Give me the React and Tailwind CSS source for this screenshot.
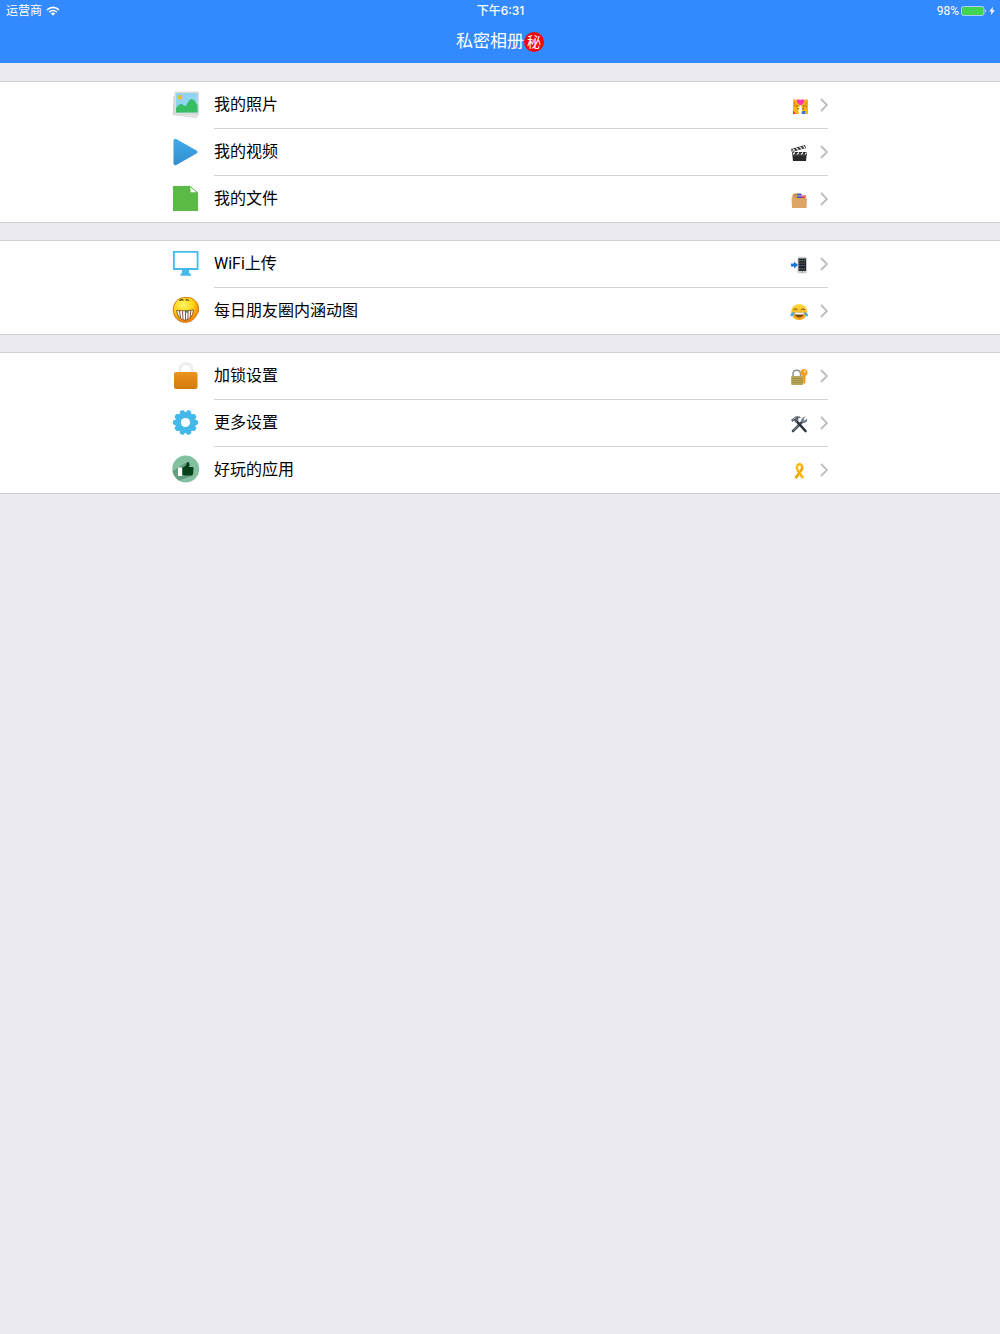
import React from "react";

const PhotoIcon = () => (
  <svg viewBox="0 0 28 28" className="size-7" aria-hidden="true">
    <path d="M1.5 5 L24 2 L26.5 23 L24.5 27 L0.8 24 Z" fill="#d2d2d2" />
    <path d="M24.5 27 L25 24 L4 24 Z" fill="#e2e2e2" />
    <rect x="2.5" y="0.5" width="24.5" height="23.5" fill="#dcdcdc" />
    <rect x="4" y="2" width="21.5" height="19.5" fill="#8fd5f3" />
    <circle cx="8.2" cy="6.2" r="2.2" fill="#f3b71f" />
    <path d="M4 21.5 V17 C6 15 7 12.5 9.5 13 C11.500 13.500 12 15.500 13.500 15 C15.500 14 16 8.500 19.500 8 C22.500 8 23.500 12 25.500 14 V21.500 Z" fill="#37bd62" />
  </svg>
);

const VideoIcon = () => (
  <svg viewBox="0 0 28 28" className="size-7" aria-hidden="true">
    <defs>
      <linearGradient id="play" x1="0" y1="0" x2="0" y2="1">
        <stop offset="0" stopColor="#41a9ea" />
        <stop offset="1" stopColor="#318fcf" />
      </linearGradient>
    </defs>
    <path d="M1.500 2.500 Q1.800 0 4.300 1 L24 12.200 Q27 14 24 15.800 L4.300 27 Q1.800 28 1.500 25.500 Z" fill="url(#play)" />
  </svg>
);

const FileIcon = () => (
  <svg viewBox="0 0 28 28" className="size-7" aria-hidden="true">
    <path d="M1 2 H18 L26 9 V27 H1 Z" fill="#5bb946" />
    <path d="M18 2 H26 V9 Z" fill="#fff" />
    <path d="M18 3 L25 8.300 H18.800 Z" fill="#fff" />
    <path d="M17.600 2 L26 9" stroke="#5bb946" strokeWidth="1" />
  </svg>
);

const MonitorIcon = () => (
  <svg viewBox="0 0 28 28" className="size-7" aria-hidden="true">
    <path d="M1 1 H26.500 V20 H1 Z M2.800 2.800 V18 H24.700 V2.800 Z" fill="#45bbec" fillRule="evenodd" />
    <path d="M10 20 H17 V23 L19 24 V25.800 H8.500 V24 L10 23 Z" fill="#45bbec" />
  </svg>
);

const GrinIcon = () => (
  <svg viewBox="0 0 28 28" className="size-7" aria-hidden="true">
    <defs>
      <radialGradient id="grin" cx="0.400" cy="0.300" r="0.700">
        <stop offset="0" stopColor="#fff46a" />
        <stop offset="0.550" stopColor="#ffd510" />
        <stop offset="1" stopColor="#ed7b08" />
      </radialGradient>
    </defs>
    <path d="M12 1.500 C20 0.500 26 5 26.500 12 C27 16 25.500 17.500 24.500 19 C22 24.500 17 26.500 12.500 26.300 C6 26 1.500 21 1.200 14 C1.200 7 6 2 12 1.500 Z" fill="url(#grin)" stroke="#d97813" strokeWidth="1" />
    <path d="M7.500 4.800 Q9.500 2.800 11.500 4.300 M13.500 4.300 Q15.500 2.800 17 4.800" fill="none" stroke="#55400a" strokeWidth="1.100" />
    <path d="M4.500 14.500 Q13 15.500 21.500 14 Q20.500 23.500 13 24.300 Q6 23.500 4.500 14.500 Z" fill="#fff" stroke="#8b4c20" strokeWidth="0.900" />
    <path d="M7.500 15 L8.500 22 M10.500 15.300 L11 23.500 M13.500 15.300 V24 M16.200 15.200 L15.800 23.500 M18.800 14.800 L18 22" stroke="#83543e" strokeWidth="1" />
    <path d="M12.800 14.500 L16 15 L15.200 17.500 Z" fill="#278b4e" />
  </svg>
);

const LockIcon = () => (
  <svg viewBox="0 0 28 28" className="size-7" aria-hidden="true">
    <defs>
      <linearGradient id="lock" x1="0" y1="0" x2="0" y2="1">
        <stop offset="0" stopColor="#eb951f" />
        <stop offset="1" stopColor="#d37a0c" />
      </linearGradient>
    </defs>
    <path d="M8 12 V7.500 Q8 1.500 14 1.500 Q20 1.500 20 7.500 V12" fill="none" stroke="#ededed" strokeWidth="3" />
    <rect x="2" y="10" width="23.500" height="17" rx="2" fill="url(#lock)" />
  </svg>
);

const GearIcon = () => (
  <svg viewBox="0 0 28 28" className="size-7" aria-hidden="true">
    <g fill="#45b8ea">
      <circle cx="13.500" cy="13.500" r="10.500" />
      {[18, 54, 90, 126, 162, 198, 234, 270, 306, 342].map((angle) => (
        <path key={angle} d="M10.500 4.500 L11.500 1.300 Q13.500 0.500 15.500 1.300 L16.500 4.500 Z" transform={`rotate(${angle} 13.500 13.500)`} />
      ))}
    </g>
    <circle cx="13.500" cy="13.500" r="4.600" fill="#fff" />
  </svg>
);

const ThumbIcon = () => (
  <svg viewBox="0 0 28 28" className="size-7" aria-hidden="true">
    <circle cx="13.700" cy="14" r="13.500" fill="#83c0a0" />
    <path d="M6 12.500 L15 7 L21 20.500 L7 25.500 Q2 22 0.800 16 Z" fill="#659c80" />
    <rect x="6" y="12.500" width="4" height="8.500" fill="#fff" />
    <path d="M10.500 12.500 Q14.500 11 14.800 8 Q15.500 6.500 17 7.500 Q18.300 9.500 16.800 12 H20.500 Q22 12.500 21.500 14 L21 19 Q20.500 20.500 19 20.500 H12.500 L10.500 19.500 Z" fill="#044219" />
  </svg>
);

const KissEmoji = () => (
  <svg viewBox="0 0 18 18" className="size-[18px]" aria-hidden="true">
    <path d="M3 2.500 Q7 1.500 9 5 L10 9 L8 11 L9 17 H3 Z" fill="#f7b81b" />
    <path d="M18 2.500 Q14 1.500 12 5 L11 9 L12 11 L11.500 17 H18 Z" fill="#f6b51a" />
    <path d="M3.500 5 Q6 6 4.500 10 M17 5 Q15 7 16.500 11" stroke="#d88b10" strokeWidth="1.200" fill="none" />
    <path d="M6 9 H8 M13 9 H15 M7 12 L9 11.500 M14 12 L12 11.500" stroke="#8f4d0b" strokeWidth="1" />
    <path d="M3 13.500 L6 17 H3 Z" fill="#e53b32" />
    <path d="M12.500 14 H15.500 L15 17 H11.500 Z" fill="#317ed3" />
    <path d="M10.500 8.500 C4.500 5 6.500 0.500 10.500 3 C14.500 0.500 16.500 5 10.500 8.500 Z" fill="#ff37ae" />
  </svg>
);

const ClapperEmoji = () => (
  <svg viewBox="0 0 18 18" className="size-[18px]" aria-hidden="true">
    <path d="M2 8 H17 L16 17 H3 Z" fill="#292929" />
    <path d="M1 5 L15 1 L16 4 L2 8 Z" fill="#343434" />
    <path d="M3 5 L5 6.500 M6 4 L8.500 5.800 M9.500 3 L12 4.800 M13 2 L15 3.800 M3 10.500 L5 8.500 M7 10.500 L9 8.500 M11 10.500 L13 8.500 M15 10.500 L16.500 8.500" stroke="#f4f4f4" strokeWidth="1.100" />
    <path d="M3 11 H16" stroke="#777" strokeWidth="0.600" />
    <circle cx="2.800" cy="7" r="1.600" fill="#999" />
  </svg>
);

const FolderEmoji = () => (
  <svg viewBox="0 0 18 18" className="size-[18px]" aria-hidden="true">
    <path d="M2.500 8 V4 L4 2.500 H7 L8 4 H15.500 V8 Z" fill="#cb9352" />
    <path d="M7 2.500 H11 L12 4 V7 H7 Z" fill="#454fe0" />
    <path d="M11.500 4 H15.500 V7 H11.500 Z" fill="#e54444" />
    <path d="M7 4.800 H15" stroke="#f3e7ee" strokeWidth="0.700" />
    <path d="M1.500 6.500 H6.500 L7.500 7.500 H17 L16.500 17 H2 Z" fill="#dda568" />
  </svg>
);

const PhoneEmoji = () => (
  <svg viewBox="0 0 18 18" className="size-[18px]" aria-hidden="true">
    <rect x="7.500" y="0.800" width="9.500" height="16.500" rx="1.500" fill="#cfcfcf" />
    <rect x="8.500" y="2.500" width="7.500" height="12.500" fill="#25262b" />
    <g strokeWidth="1.200" strokeDasharray="1.200 1">
      <path d="M9.200 4.500 H15.500" stroke="#5b9c74" />
      <path d="M9.200 7 H15.500" stroke="#87656e" />
      <path d="M9.200 9.500 H15.500" stroke="#5b6c9c" />
      <path d="M9.200 13 H15.500" stroke="#71919c" />
    </g>
    <circle cx="12.300" cy="16.200" r="0.700" fill="#888" />
    <path d="M1 7.500 H4 V5.500 L8 9 L4 12.500 V10.500 H1 Z" fill="#1677df" />
  </svg>
);

const JoyEmoji = () => (
  <svg viewBox="0 0 18 18" className="size-[18px]" aria-hidden="true">
    <defs>
      <linearGradient id="joy" x1="0" y1="0" x2="0" y2="1">
        <stop offset="0" stopColor="#ffdc3e" />
        <stop offset="1" stopColor="#f5a01c" />
      </linearGradient>
    </defs>
    <circle cx="9.200" cy="9" r="8" fill="url(#joy)" />
    <path d="M3.500 6.800 Q5.500 4.800 7.500 6.800 M11 6.800 Q13 4.800 15 6.800" fill="none" stroke="#7a4a0e" strokeWidth="1" />
    <path d="M4 9.500 H14.500 Q13.500 14.500 9.200 14.500 Q5 14.500 4 9.500 Z" fill="#854a06" />
    <path d="M4.500 9.500 H14 L13.500 11.500 H5 Z" fill="#fff" />
    <path d="M4 9 Q0 10 0.500 13 Q3.500 14.500 4 9 Z M14.500 9 Q18.500 10 18 13 Q15 14.500 14.500 9 Z" fill="#42abe9" />
  </svg>
);

const LockKeyEmoji = () => (
  <svg viewBox="0 0 18 18" className="size-[18px]" aria-hidden="true">
    <path d="M3 9 V6 Q3 2.200 6.800 2.200 Q10.500 2.200 10.500 6 V9" fill="none" stroke="#8f9396" strokeWidth="1.500" />
    <rect x="1.200" y="8" width="12" height="9" rx="1" fill="#b5a65a" />
    <path d="M1.500 10.500 H13 M1.500 12.500 H13 M1.500 14.500 H13" stroke="#94863f" strokeWidth="0.700" />
    <path d="M12.500 6 V14 L14.300 16 L15.500 14.500 V6" fill="#f1a01e" />
    <circle cx="14" cy="4.500" r="3.500" fill="#f0a01f" />
    <circle cx="14.800" cy="3.300" r="0.900" fill="#fff" />
  </svg>
);

const ToolsEmoji = () => (
  <svg viewBox="0 0 18 18" className="size-[18px]" aria-hidden="true">
    <path d="M3 16 L13 6" stroke="#444c57" strokeWidth="2.600" strokeLinecap="round" />
    <path d="M15.500 1.500 L13.500 4 L14.500 5.500 L17 3.500 Q18 7 14.500 8 Q11 8 11.300 5 Q11.500 2 15.500 1.500 Z" fill="#778492" />
    <path d="M6 5.500 L15.500 16" stroke="#29313d" strokeWidth="2.600" strokeLinecap="round" />
    <path d="M1 5 L5.500 1.500 Q9 0.500 11 2.500 L8 3.500 L8.500 6 L6 8 L4 5.500 L2.500 7 Z" fill="#59626d" />
    <path d="M3 4.500 L6 2.500 M3.500 15 L8 10.500" stroke="#bac4cc" strokeWidth="0.700" />
  </svg>
);

const RibbonEmoji = () => (
  <svg viewBox="0 0 18 18" className="size-[18px]" aria-hidden="true">
    <path d="M12.500 2.500 Q15 7 11 10.500 L6.800 17 L4.300 15.200 L9.300 9 Q11.500 6 11 3.500 Z" fill="#edaa06" />
    <path d="M6.300 3 Q9.300 -1 12.500 2.500 L11.200 5 Q9.500 3 8 4.500 Q8 7 10.500 10 L14.200 15.200 L11.800 17 L8 11 Q4.500 7 6.300 3 Z" fill="#fbbc13" />
    <path d="M7.500 9.500 L10.500 12" stroke="#d78d03" strokeWidth="0.700" />
  </svg>
);

const groups = [
  [
    { label: "我的照片", Icon: PhotoIcon, Emoji: KissEmoji },
    { label: "我的视频", Icon: VideoIcon, Emoji: ClapperEmoji },
    { label: "我的文件", Icon: FileIcon, Emoji: FolderEmoji },
  ],
  [
    { label: "WiFi上传", Icon: MonitorIcon, Emoji: PhoneEmoji },
    { label: "每日朋友圈内涵动图", Icon: GrinIcon, Emoji: JoyEmoji },
  ],
  [
    { label: "加锁设置", Icon: LockIcon, Emoji: LockKeyEmoji },
    { label: "更多设置", Icon: GearIcon, Emoji: ToolsEmoji },
    { label: "好玩的应用", Icon: ThumbIcon, Emoji: RibbonEmoji },
  ],
];

function StatusBar() {
  return (
    <div className="grid h-[21px] grid-cols-3 items-center pr-[5px] pl-1.5 text-xs">
      <div className="flex items-center gap-1">
        <span>运营商</span>
        <svg viewBox="0 0 14 10" className="h-2.5 w-3.5" fill="none" stroke="#fff" strokeWidth="1.600" aria-label="Wi-Fi">
          <path d="M1 3.800 Q7 -1.200 13 3.800 M3.200 6.100 Q7 2.900 10.800 6.100" />
          <path d="M4.900 7.500 Q7 5.700 9.100 7.500 L7 9.700 Z" fill="#fff" stroke="none" />
        </svg>
      </div>
      <div className="text-center font-medium">下午6:31</div>
      <div className="flex items-center justify-end gap-0.5">
        <span className="font-['Roboto',sans-serif]">98%</span>
        <svg viewBox="0 0 26 10" className="h-2.5 w-[26px]" aria-label="电池">
          <rect x="0.500" y="0.500" width="22.500" height="9" rx="1.800" fill="#42d451" stroke="#a9ceff" />
          <path d="M24 3.200 Q25.800 5 24 6.800 Z" fill="#fff" />
        </svg>
        <svg viewBox="0 0 6 10" className="h-2.5 w-1.5" aria-hidden="true">
          <path d="M4 0.800 L0.300 5.500 H2.500 L1.800 9.200 L5.800 4.300 H3.500 Z" fill="#fff" />
        </svg>
      </div>
    </div>
  );
}

function Row({ label, Icon, Emoji, last }) {
  return (
    <li>
      <button type="button" className={last ? "block w-full border-b border-[#cfced3]" : "block w-full"}>
        <span className="mx-auto flex max-w-[656px] items-center gap-3.5 text-left">
          <span className="pb-0.5">
            <Icon />
          </span>
          <span className={last ? "flex h-[46px] flex-1 items-center" : "flex h-[47px] flex-1 items-center border-b border-[#d3d2d6]"}>
            <span className="flex-1 text-base leading-6">{label}</span>
            <span className="mt-0.5 mr-3">
              <Emoji />
            </span>
            <svg viewBox="0 0 8 14" className="h-3.5 w-2" fill="none" stroke="#bdbdc2" strokeWidth="1.800" aria-hidden="true">
              <path d="M1 1 L7 7 L1 13" />
            </svg>
          </span>
        </span>
      </button>
    </li>
  );
}

export default function App() {
  return (
    <div lang="zh-CN" className="min-h-screen bg-[#ebebf1] font-['Inter','Noto_Sans_CJK_SC',sans-serif] text-black">
      <header className="bg-[#338aff] text-white">
        <StatusBar />
        <h1 className="flex h-[42px] items-center justify-center text-[17px]">
          <span>私密相册</span>
          <span className="flex size-5 items-center justify-center rounded-full bg-[#f50505] text-[14px] leading-none">秘</span>
        </h1>
      </header>
      <main className="flex flex-col gap-[17px] pt-[18px] font-['Roboto','Noto_Sans_CJK_SC',sans-serif]">
        {groups.map((rows, index) => (
          <ul key={index} className="border-t border-[#cfced3] bg-white">
            {rows.map((row, i) => (
              <Row key={row.label} {...row} last={i === rows.length - 1} />
            ))}
          </ul>
        ))}
      </main>
    </div>
  );
}
